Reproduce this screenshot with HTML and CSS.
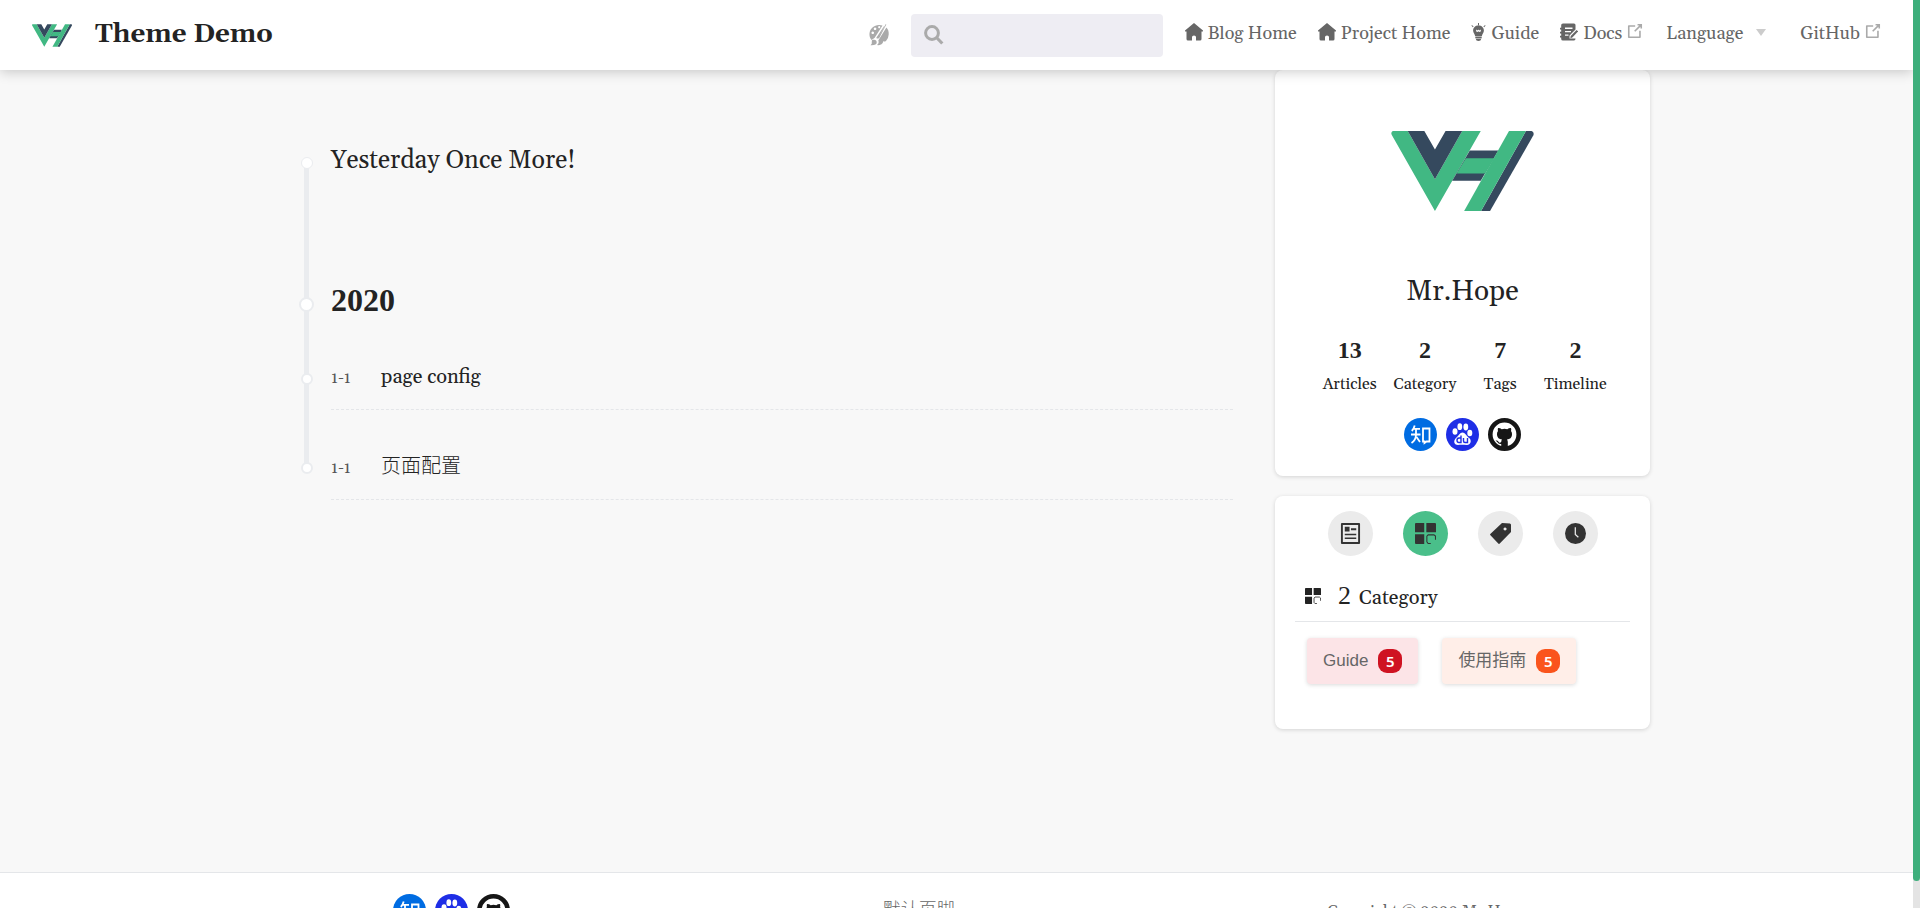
FILE: index.html
```html
<!DOCTYPE html>
<html lang="en">
<head>
<meta charset="utf-8">
<meta name="viewport" content="width=device-width, initial-scale=1">
<title>Timeline | Theme Demo</title>
<link rel="stylesheet" href="styles.css">
</head>
<body>
<svg class="sprite" aria-hidden="true">
  <symbol id="logo" viewBox="0 0 430 241">
    <path fill="#41b883" d="M5 0H50L132 145 214 0H270L132 241 2 12Q-2 4 5 0Z"/>
    <path fill="#35495e" d="M50 0H100L132 56 164 0H214L132 145Z"/>
    <path fill="#35495e" d="M237 59H323L270 150H184Z"/>
    <path fill="#41b883" d="M225 82H311L283 128H197Z"/>
    <path fill="#35495e" d="M406 0H423Q431 2 429 12L298 241H271Z"/>
    <path fill="#41b883" d="M355 0H406L271 241H220Z"/>
  </symbol>
  <symbol id="home" viewBox="0 0 18 18">
    <path d="M9 0 18 7.600Q18.300 8.600 17.200 8.600H16.500V16Q16.500 17.500 15 17.500H11V14Q11 12.500 9 12.500T7 14V17.500H3Q1.500 17.500 1.500 16V8.600H.8Q-.3 8.600 0 7.600Z"/>
  </symbol>
  <symbol id="bulb" viewBox="0 0 14 18">
    <path d="M6.500 0h1v2.500h-1zM.4 2l1.700 1.600-.7.7L0 2.700zM13.600 2l-1.700 1.600.7.7L14 2.700z"/>
    <path fill-rule="evenodd" d="M7 2.500C3.800 2.500 1.600 4.600 1.600 7.600 1.600 10 3.200 11 3.600 13H10.400C10.800 11 12.400 10 12.400 7.600 12.400 4.600 10.200 2.500 7 2.500ZM5 6.500 6.200 7.400 7 6.600 7.800 7.400 9 6.500 9.600 8.200 7.800 9 7 8.200 6.200 9 4.400 8.200Z"/>
    <path d="M3.800 13.500h6.400v1.700H3.800zM4.200 15.700h5.600Q9.500 18 7 18T4.200 15.700Z"/>
  </symbol>
  <symbol id="docs" viewBox="0 0 18 18">
    <path fill-rule="evenodd" d="M3 .5H14Q15.500.5 15.500 2V6.500L9.500 12.500V15.500H15.500Q15.500 17.500 14 17.500H3Q1.200 17.500 1.200 16V14.500H0V12.700H1.200V10.500H0V8.700H1.200V6.500H0V4.700H1.200V2Q1.200.5 3 .5ZM5 4.500V5.900H12.500V4.500ZM5 8V9.300H11V8ZM5 11.400V12.700H8.500V11.400Z"/>
    <path d="M16.600 7 18.200 8.300 12.300 14.600 10.400 15.200 10.700 13.100Z"/>
  </symbol>
  <symbol id="outbound" viewBox="0 0 100 100">
    <path d="M18.800 85.100h56c2.200 0 4-1.800 4-4v-32h-8v28h-48v-48h28v-8h-32c-2.200 0-4 1.800-4 4v56c0 2.200 1.800 4 4 4z"/>
    <path d="M45.700 48.700 51.300 54.300 77.200 28.500V37.200H85.200V14.900H62.800V22.900H71.500Z"/>
  </symbol>
  <symbol id="palette" viewBox="0 0 20 22">
    <path fill-rule="evenodd" d="M13.500 1.600C7-.5 1 3.500.5 9.500.3 12 1 14.500 2.600 16L5.700 13.800ZM6 3.500a1.300 1.300 0 1 0 .1 0ZM3.700 7.500a1.300 1.300 0 1 0 .1 0ZM10.200 2a1.100 1.100 0 1 0 .1 0Z"/>
    <path d="M15 2.200 7.300 13.700 8 14.800 9 14.200 15.700 2.600ZM16.800 0 17.300.6 10 14.600 9 14.200ZM17.400 3.500Q20 6 19.700 10.500T17 17Q15 18 14.300 17 14 19.500 12.500 20.200 10 21.500 8 21 10.500 19 9.300 16.500ZM4.500 15.800Q7.700 15.500 7.700 18.500T1.500 21.200Q3.300 19.800 2.800 17.700T4.500 15.800Z"/>
  </symbol>
  <symbol id="search" viewBox="0 0 20 20">
    <circle cx="8" cy="8" r="6.400" fill="none" stroke="currentColor" stroke-width="3"/>
    <path d="m12.500 12.500 5.800 6" fill="none" stroke="currentColor" stroke-width="3.200"/>
  </symbol>
  <symbol id="zhihu" viewBox="0 0 33 33">
    <circle cx="16.500" cy="16.500" r="16.500" fill="#006ce2"/>
    <path fill="none" stroke="#fff" stroke-width="1.800" d="M10.700 7.500Q9.800 11 7.800 13M9.500 10.800H16M7 16.500H16.500M12 11V16.500Q12 22 7.500 25M12.500 19 16 24"/>
    <path fill="none" stroke="#fff" stroke-width="1.800" d="M19 10.500H25.500V23.500H22.500L20.500 25V23.500H19Z"/>
  </symbol>
  <symbol id="baidu" viewBox="0 0 33 33">
    <circle cx="16.500" cy="16.500" r="16.500" fill="#1e2ee6"/>
    <g fill="#fff"><ellipse cx="9" cy="13.500" rx="2.500" ry="3.300"/><ellipse cx="13.800" cy="8.700" rx="2.400" ry="3.400"/><ellipse cx="19.800" cy="9" rx="2.400" ry="3.400"/><ellipse cx="23.800" cy="15" rx="2.500" ry="3.200"/>
    <path d="M16.500 14.500C19 14.500 20.500 18 23.500 20.300 26 23 24.500 27 21 27 18 27 15 26.500 12 27 8.500 27 7 23.500 9.500 20.500 12.500 18 14 14.500 16.500 14.500Z"/></g>
    <path fill="none" stroke="#1e2ee6" stroke-width="1.400" d="M15 17.500V24.500H13Q11 24.500 11 22.300T13 20H15M17.500 20V23Q17.500 24.500 19 24.500H21.500V20"/>
  </symbol>
  <symbol id="github" viewBox="0 0 33 33">
    <circle cx="16.500" cy="16.500" r="14.200" fill="#fff" stroke="#161616" stroke-width="4.600"/>
    <path fill="#161616" d="M10 10Q12.500 10 13.700 11.200 16.500 10.500 19.300 11.200 20.500 10 23 10 23.500 12 23 13 24.300 14.500 24 17 23.500 21 19 21.500 19.800 22.500 19.800 24V29H13.200V26Q10.500 26.500 9.500 24.300L7.500 22.500Q9.500 22 10.500 23.700T13.200 24Q13.300 22.200 14 21.500 9.500 21 9 17 8.700 14.500 10 13 9.500 12 10 10Z"/>
  </symbol>
  <symbol id="article" viewBox="0 0 20 22">
    <path fill-rule="evenodd" d="M1 0H19Q20 0 20 1V21Q20 22 19 22H1Q0 22 0 21V1Q0 0 1 0ZM2 2V20H18V2ZM4 4H9V9H4ZM10.500 5.500H16V7.500H10.500ZM4 11.200H16V12.800H4ZM4 15.200H16V16.800H4Z"/>
  </symbol>
  <symbol id="category" viewBox="0 0 20 20">
    <path d="M1 0H8.800V8.800H0V1Q0 0 1 0ZM10.800 0H19Q20 0 20 1V8.800H10.800ZM0 10.800H8.800V20H1Q0 20 0 19Z"/>
    <path fill="none" stroke="currentColor" d="M15 19.500H12.500L11.300 18V12.500L12.500 11.300H18L19.500 12.500V16"/>
  </symbol>
  <symbol id="tag" viewBox="0 0 21 21">
    <path fill-rule="evenodd" d="M12 0 20 .5 21 1.500V9L9.500 20.800Q9 21 8.500 20.800L.2 12Q-.1 11.500.3 11ZM15 4.500a1.500 1.500 0 1 0 .1 0Z"/>
  </symbol>
  <symbol id="clock" viewBox="0 0 22 22">
    <circle cx="11" cy="11" r="11"/><path d="M10.800 4.500V12L14 15" fill="none" stroke="#ebebeb" stroke-width="1.300"/>
  </symbol>
</svg>

<header class="navbar">
  <a class="brand" href="#"><svg class="brand-logo" aria-hidden="true"><use href="#logo"/></svg><span>Theme Demo</span></a>
  <div class="nav-right">
    <button class="theme-button" aria-label="Theme color"><svg aria-hidden="true"><use href="#palette"/></svg></button>
    <label class="search"><svg aria-hidden="true"><use href="#search"/></svg><input type="text" aria-label="Search"></label>
    <nav class="nav-links">
      <a href="#"><svg class="nav-icon" aria-hidden="true"><use href="#home"/></svg>Blog Home</a>
      <a href="#"><svg class="nav-icon" aria-hidden="true"><use href="#home"/></svg>Project Home</a>
      <a href="#"><svg class="nav-icon narrow" aria-hidden="true"><use href="#bulb"/></svg>Guide</a>
      <a href="#"><svg class="nav-icon" aria-hidden="true"><use href="#docs"/></svg>Docs<svg class="outbound" aria-hidden="true"><use href="#outbound"/></svg></a>
      <button class="language">Language<span class="arrow"></span></button>
      <a href="#">GitHub<svg class="outbound" aria-hidden="true"><use href="#outbound"/></svg></a>
    </nav>
  </div>
</header>

<main class="blog">
  <section class="timeline">
    <p class="motto">Yesterday Once More!</p>
    <h2 class="year">2020</h2>
    <ul class="entries">
      <li><time>1-1</time><a href="#">page config</a></li>
      <li><time>1-1</time><a href="#" lang="zh">页面配置</a></li>
    </ul>
  </section>
  <aside class="sidebar">
    <section class="card profile">
      <svg class="avatar" role="img" aria-label="Mr.Hope"><use href="#logo"/></svg>
      <h1 class="name">Mr.Hope</h1>
      <div class="stats">
        <a href="#"><b>13</b><span>Articles</span></a>
        <a href="#"><b>2</b><span>Category</span></a>
        <a href="#"><b>7</b><span>Tags</span></a>
        <a href="#"><b>2</b><span>Timeline</span></a>
      </div>
      <div class="social">
        <a href="#" aria-label="Zhihu"><svg><use href="#zhihu"/></svg></a>
        <a href="#" aria-label="Baidu"><svg><use href="#baidu"/></svg></a>
        <a href="#" aria-label="GitHub"><svg><use href="#github"/></svg></a>
      </div>
    </section>
    <section class="card info">
      <div class="tabs">
        <button aria-label="Articles"><svg><use href="#article"/></svg></button>
        <button class="active" aria-label="Category"><svg><use href="#category"/></svg></button>
        <button aria-label="Tags"><svg><use href="#tag"/></svg></button>
        <button aria-label="Timeline"><svg><use href="#clock"/></svg></button>
      </div>
      <h3 class="info-title"><svg aria-hidden="true"><use href="#category"/></svg><span class="num">2</span><span>Category</span></h3>
      <div class="tags">
        <a class="tag red" href="#">Guide<span class="count">5</span></a>
        <a class="tag orange" href="#" lang="zh">使用指南<span class="count">5</span></a>
      </div>
    </section>
  </aside>
</main>

<footer class="footer">
  <div class="social">
    <a href="#" aria-label="Zhihu"><svg><use href="#zhihu"/></svg></a>
    <a href="#" aria-label="Baidu"><svg><use href="#baidu"/></svg></a>
    <a href="#" aria-label="GitHub"><svg><use href="#github"/></svg></a>
  </div>
  <div class="footer-text" lang="zh">默认页脚</div>
  <div class="copyright">Copyright © 2020 Mr.Hope</div>
</footer>
<div class="scroll-track"><div class="scroll-thumb"></div></div>
</body>
</html>
```
FILE: styles.css
```css
*, *::before { box-sizing: border-box; }
body {
  margin: 0;
  padding-right: 7px;
  height: 100vh;
  overflow: hidden;
  background: #f8f8f8;
  color: #232323;
  font-family: Gelasio, Georgia, "Noto Sans CJK SC", serif;
  font-size: 18px;
}
a { color: inherit; text-decoration: none; }
button { border: 0; padding: 0; background: none; color: inherit; font: inherit; cursor: pointer; }
svg { fill: currentColor; display: block; }
.sprite { display: none; }
[lang="zh"] { font-weight: 300; }

.navbar {
  position: relative;
  z-index: 2;
  display: flex;
  align-items: center;
  justify-content: space-between;
  height: 70px;
  padding: 0 30px 0 32px;
  background: #fff;
  box-shadow: 0 2px 12px rgba(0, 0, 0, .2);
}
.brand { display: flex; align-items: center; gap: 23px; font-size: 26px; font-weight: 700; line-height: 36px; }
.brand-logo { width: 40px; height: 23px; }
.nav-right { display: flex; align-items: center; gap: 22px; }
.theme-button { color: #aaa; }
.theme-button svg { width: 20px; height: 22px; }
.search {
  display: flex;
  align-items: center;
  gap: 12px;
  width: 252px;
  height: 43px;
  padding: 0 13px;
  border-radius: 4px;
  background: #eeedf3;
  color: #aaa;
}
.search svg { width: 20px; height: 20px; flex: none; }
.search input { width: 100%; border: 0; outline: 0; background: none; font: inherit; }
.nav-links { display: flex; align-items: center; gap: 21px; color: #666; line-height: 26px; padding-bottom: 2px; }
.nav-links > * { display: flex; align-items: center; }
.nav-icon { width: 18px; height: 18px; margin: 0 5px 4px 0; }
.nav-icon.narrow { width: 15px; }
.outbound { width: 20px; height: 20px; margin-left: 3px; color: #aaa; align-self: flex-start; }
.arrow { margin: 0 13px; border: 5px solid transparent; border-top: 7px solid #ccc; border-bottom: 0; }
.language .arrow { margin-bottom: 4px; }

.blog { display: flex; gap: 42px; max-width: 1387px; margin: 0 auto; padding-bottom: 143px; }
.timeline { position: relative; flex: 1; margin: 71px 0 0 41px; padding-left: 27px; }
.timeline::before { content: ""; position: absolute; top: 22px; left: 0; width: 5px; height: 306px; background: #eaecef; }
.motto, .year, .entries li { position: relative; margin: 0; }
.motto::before, .year::before, .entries li::before {
  content: "";
  position: absolute;
  left: -30px;
  width: 12px;
  height: 12px;
  border: 2px solid #eaecef;
  border-radius: 50%;
  background: #fff;
}
.motto { font-size: 25px; line-height: 40px; }
.motto::before { top: 16px; border-width: 1px; }
.year { margin-top: 95px; font: 700 32px/48px "Liberation Serif", serif; }
.year::before { top: 21px; left: -32px; width: 15px; height: 15px; }
.entries { margin: 0; padding: 0; list-style: none; }
.entries li { display: flex; align-items: baseline; padding: 42px 0 20px; border-bottom: 1px dashed #e4e6e9; font-size: 20px; line-height: 22px; }
.entries li::before { top: 49px; }
.entries li + li { padding-top: 46px; }
.entries li + li::before { top: 52px; }
.entries time { width: 50px; font-size: 16px; color: #555; }

.sidebar { width: 375px; display: flex; flex-direction: column; gap: 20px; }
.card { background: #fff; border-radius: 8px; box-shadow: 0 1px 4px rgba(0, 0, 0, .15); }
.profile { display: flex; flex-direction: column; align-items: center; padding: 61px 37px 25px; }
.avatar { width: 143px; height: 80px; }
.name { margin: 61px 0 0; font-size: 28px; font-weight: 400; line-height: 40px; }
.stats { display: grid; grid-template-columns: repeat(4, 1fr); width: 100%; margin-top: 22px; text-align: center; font-size: 16px; }
.stats a { display: flex; flex-direction: column; align-items: center; }
.stats b { font: 700 24px/32px "Liberation Serif", serif; }
.stats span { margin-top: 5px; line-height: 26px; }
.social { display: flex; gap: 9px; }
.profile .social { margin-top: 21px; }
.social svg { width: 33px; height: 33px; }

.info { padding: 15px 20px 45px; }
.tabs { display: grid; grid-template-columns: repeat(4, 1fr); margin: 0 17px 0 18px; justify-items: center; }
.tabs button { display: grid; place-items: center; width: 45px; height: 45px; border-radius: 50%; background: #ebebeb; color: #333; }
.tabs .active { background: #4abf8a; }
.tabs svg { width: 21px; height: 21px; }
.info-title { display: flex; align-items: baseline; margin: 18px 0 16px; padding: 4px 10px 5px; border-bottom: 1px solid #e4e6e9; font-size: 20px; font-weight: 400; line-height: 36px; }
.info-title svg { width: 16px; height: 16px; margin-right: 17px; }
.num { margin-right: 8px; font: 26px/36px "Liberation Serif", serif; }
.tags { display: flex; flex-wrap: wrap; gap: 24px; padding-left: 12px; }
.tag {
  display: flex;
  align-items: center;
  gap: 10px;
  height: 46px;
  padding: 0 16px;
  border-radius: 4px;
  box-shadow: 0 1px 4px rgba(0, 0, 0, .15);
  color: #666;
  font: 17px/24px "Liberation Sans", "Noto Sans CJK SC", sans-serif;
}
.count { width: 24px; border-radius: 9px; color: #fff; font: 600 15px/24px "Noto Sans", sans-serif; text-align: center; }
.red { background: #fce4e7; }
.red .count { background: #cf1322; }
.orange { background: #ffeee8; }
.orange .count { background: #fa541c; }

.footer { display: flex; justify-content: space-evenly; padding: 18px 6px 24px 8px; border-top: 1px solid #e4e6e9; background: #fff; color: #666; font-size: 18px; }
.footer .social { padding: 3px 0 0 12px; }
.footer-text { line-height: 40px; }
.copyright { padding-right: 8px; font-size: 16px; line-height: 40px; }

.scroll-track { position: fixed; z-index: 3; top: 0; right: 0; bottom: 0; width: 7px; background: #e4e4e4; }
.scroll-thumb { height: 97%; border-radius: 0 0 4px 4px; background: #3eaf7c; }
```
